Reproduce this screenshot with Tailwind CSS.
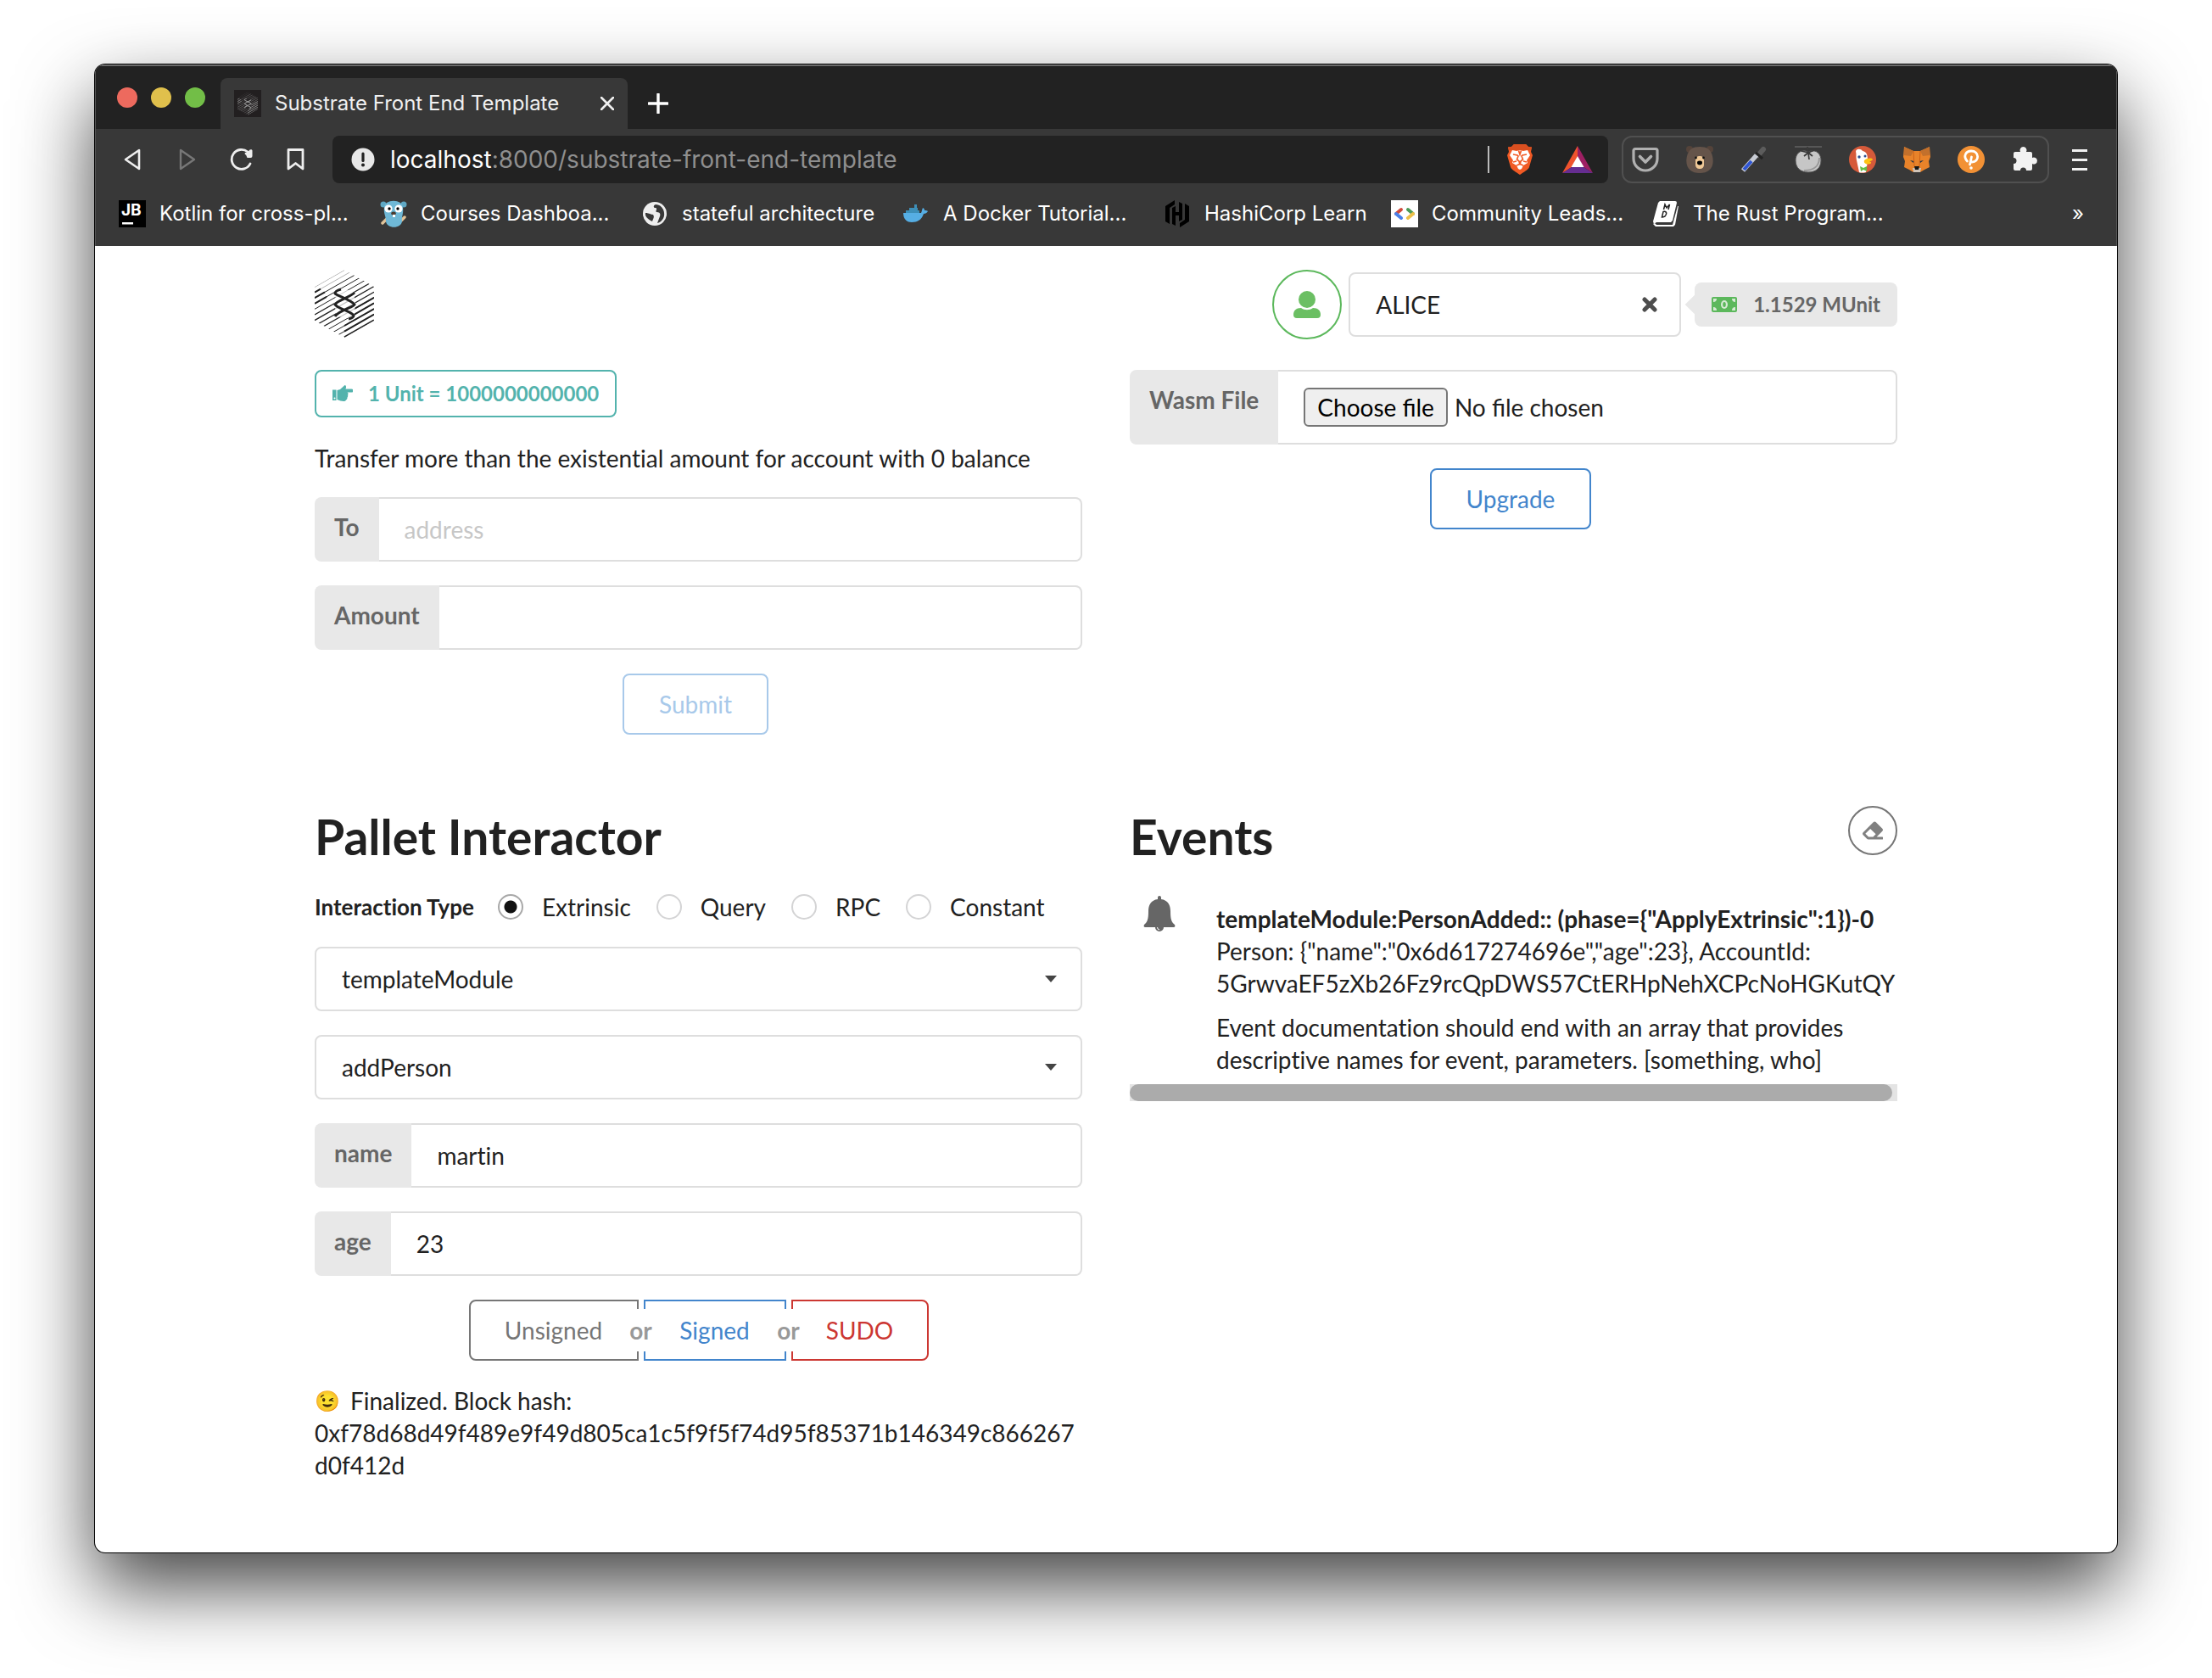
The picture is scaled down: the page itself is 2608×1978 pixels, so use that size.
<!DOCTYPE html>
<html lang="en">
<head>
<meta charset="utf-8">
<meta name="viewport" content="width=device-width, initial-scale=1">
<title>Substrate Front End Template</title>
<script src="https://cdn.jsdelivr.net/npm/@tailwindcss/browser@4"></script>
</head>
<body class="flex min-h-screen bg-white px-28 pt-19 pb-37 font-['Lato',sans-serif] text-[28px] leading-10 text-[#212121] [font-variant-ligatures:no-common-ligatures]">

<svg class="absolute size-0" aria-hidden="true">
  <defs>
    <clipPath id="hex"><path d="M35 0 70 20V60L35 80 0 60V20Z"/></clipPath>
    <symbol id="substrate" viewBox="0 0 70 80">
      <g clip-path="url(#hex)" stroke="currentColor" fill="none">
        <path stroke-width=".7" opacity=".5" d="M0 20.500 35 .5M0 26.600 70-13.400"/>
        <path stroke-width="1" d="M0 33.200 70-6.800M0 39.800 70-.2M0 46.400 70 6.400"/>
        <path stroke-width="1.300" d="M0 53 70 13M0 59.600 70 19.600M0 66.200 70 26.200M0 72.800 70 32.800"/>
        <path stroke-width="1" d="M0 79.400 70 39.400M0 86 70 46M0 92.600 70 52.600"/>
        <path stroke-width="2" d="M0 26.600 7 22.600M0 33.200 12 26.300M0 39.800 14 31.800M46 46.500 70 32.800M40 56.600 70 39.400M35 66 70 46M35 72.600 70 52.600M35 79.400 70 59.400"/>
      </g>
      <path d="M26 24 46 24 48 42 46 58 26 55 23 40Z" fill="var(--hole,#fff)" opacity=".75"/>
      <path d="M31 23C27 24 24 26 24 28 25 30 44 36 47 41 46 44 28 48 24 55M47 27C41 33 26 36 24 41 27 46 44 49 46 54 46 56 44 57 40 58" fill="none" stroke="currentColor" stroke-width="3"/>
    </symbol>
    <symbol id="caret" viewBox="0 0 14 8"><path d="M0 0H14L7 8Z" fill="currentColor"/></symbol>
  </defs>
</svg>

<div class="flex min-w-0 flex-1 flex-col overflow-hidden rounded-xl bg-white shadow-[0_0_0_1px_#000,0_40px_90px_rgba(0,0,0,0.74)]">

  <header class="border-x border-t-2 border-x-[#555] border-t-[#6b6b6b] bg-[#383838] font-['Inter',sans-serif] text-2xl text-[#f0f0f0]">
    <div class="flex h-[74px] items-end bg-[#222]">
      <div class="mt-[25px] ml-[25px] flex gap-4 self-start">
        <button aria-label="Close window" class="size-6 rounded-full bg-[#ed6a5e]"></button>
        <button aria-label="Minimise window" class="size-6 rounded-full bg-[#e0c04c]"></button>
        <button aria-label="Zoom window" class="size-6 rounded-full bg-[#72be47]"></button>
      </div>
      <div class="ml-[18px] flex h-15 w-120 items-center gap-4 rounded-t-lg bg-[#383838] px-4">
        <span class="flex size-8 items-center justify-center bg-[#221f20] text-[#999] [--hole:#221f20]"><svg class="h-7 w-6"><use href="#substrate"/></svg></span>
        <span class="flex-1 truncate">Substrate Front End Template</span>
        <button aria-label="Close tab"><svg class="size-4" viewBox="0 0 16 16"><path d="M1 1 15 15M15 1 1 15" stroke="#f0f0f0" stroke-width="2.6" stroke-linecap="round"/></svg></button>
      </div>
      <button aria-label="New tab" class="ml-6 flex h-15 items-center"><svg class="size-6" viewBox="0 0 24 24"><path d="M12 1V23M1 12H23" stroke="#fff" stroke-width="3.4" stroke-linecap="round"/></svg></button>
    </div>

    <div class="flex h-18 items-center pl-3">
      <button aria-label="Back" class="flex w-16 justify-center"><svg class="size-7" viewBox="0 0 28 28"><path d="M21 3V25L5 14Z" fill="none" stroke="#eee" stroke-width="2.6" stroke-linejoin="round"/></svg></button>
      <button aria-label="Forward" class="flex w-16 justify-center"><svg class="size-7" viewBox="0 0 28 28"><path d="M6 3V25L22 14Z" fill="none" stroke="#777" stroke-width="2.4" stroke-linejoin="round"/></svg></button>
      <button aria-label="Reload" class="flex w-16 justify-center"><svg class="size-7" viewBox="0 0 28 28"><path d="M24 19A11.5 11.5 0 1 1 21 5" fill="none" stroke="#eee" stroke-width="2.8" stroke-linecap="round"/><path d="M19 8.500a1.500 1.500 0 0 1-1-2.500c2 0 4-1 5-3 .8-1.300 3.500-1 3.500.5V10a2 2 0 0 1-2 2h-4z" fill="#eee"/></svg></button>
      <button aria-label="Bookmark this page" class="flex w-16 justify-center"><svg class="size-7" viewBox="0 0 28 28"><path d="M5 2.500H22V25L13.500 18.500 5 25Z" fill="none" stroke="#eee" stroke-width="2.8" stroke-linejoin="round"/></svg></button>

      <div class="ml-[11px] flex h-14 min-w-0 flex-1 items-center rounded-lg bg-[#222] pr-[18px] pl-[22px]">
        <svg class="size-7 shrink-0" viewBox="0 0 28 28"><circle cx="14" cy="14" r="13.500" fill="#e8e8e8"/><path d="M14 7v8.500" stroke="#222" stroke-width="3.200" stroke-linecap="round"/><circle cx="14" cy="20.500" r="2" fill="#222"/></svg>
        <div class="ml-[18px] flex-1 truncate pt-0.5 text-[28px] text-[#8f8f8f]"><span class="text-white">localhost</span>:8000/substrate-front-end-template</div>
        <span class="h-8 w-0.5 bg-[#bbb]"></span>
        <button aria-label="Brave Shields" class="ml-5"><svg class="h-9 w-8" viewBox="0 0 32 36"><path d="M9 0H23L26 3 30 3.500 29 9 31 13 27 27C26 30 20 33 16 36 12 33 6 30 5 27L1 13 3 9 2 3.500 6 3Z" fill="#f15a24"/><path d="M9 0H23L26 3 30 3.500 29 7H3L2 3.500 6 3Z" fill="#d94f20"/><path d="M7 7 12 8 16 7 20 8 25 7 28 13 24 19 25 22 20 25 18 29 16 30 14 29 12 25 7 22 8 19 4 13Z" fill="#fff"/><path d="M8 12 13 13 14 14 12.500 18 15 20 16 24 17 20 19.500 18 18 14 19 13 24 12M8 21 12 20M24 21 20 20M12 25 16 23.500 20 25M14.500 7.500 16 12 17.500 7.500" stroke="#f15a24" stroke-width="1.700" fill="none"/></svg></button>
        <button aria-label="Brave Rewards" class="ml-[34px]"><svg class="h-8 w-9" viewBox="0 0 36 32"><path d="M18 0V13L11 25 0 32Z" fill="#f0532d"/><path d="M18 0 36 32 25 25 18 13Z" fill="#9e1f63"/><path d="M0 32 11 25H25L36 32Z" fill="#662d91"/><path d="M18 12 25.500 25H10.500Z" fill="#fff"/></svg></button>
      </div>

      <div class="ml-4 flex h-14 w-126 items-center justify-between rounded-xl border-2 border-[#505050] px-2.5">
        <button aria-label="Pocket"><svg class="size-8" viewBox="0 0 32 32"><path d="M4 3.500H28A2 2 0 0 1 30 5.500V15A14 14 0 0 1 2 15V5.500A2 2 0 0 1 4 3.500Z" fill="none" stroke="#b0b0b0" stroke-width="3.200"/><path d="M9.500 12.500 16 19 22.500 12.500" fill="none" stroke="#b0b0b0" stroke-width="3.600" stroke-linecap="round" stroke-linejoin="round"/></svg></button>
        <button aria-label="TunnelBear"><svg class="size-8" viewBox="0 0 32 32"><circle cx="4" cy="4" r="4" fill="#54433a"/><circle cx="28" cy="4" r="4" fill="#54433a"/><path d="M16 1C24 1 29 4 31 12 34 25 27 32 16 32S-2 25 1 12C3 4 8 1 16 1Z" fill="#65544a"/><rect x="11" y="12" width="10" height="15" rx="4.500" fill="#f0c896"/><ellipse cx="16" cy="20" rx="3" ry="2.400" fill="#000"/><circle cx="11.500" cy="14" r="1.400" fill="#111"/><circle cx="20.500" cy="14" r="1.400" fill="#111"/></svg></button>
        <button aria-label="Colour picker"><svg class="size-8" viewBox="0 0 32 32"><path d="M21 11 27 4" stroke="#5c5c5c" stroke-width="6" stroke-linecap="round"/><path d="M18 8 26 15" stroke="#222" stroke-width="3"/><path d="M3 29 19 11" stroke="#c8ccd4" stroke-width="5.500"/><path d="M4 28 13 18" stroke="#2f55d4" stroke-width="4"/></svg></button>
        <button aria-label="Pomodoro timer"><svg class="size-8" viewBox="0 0 32 32"><path d="M0 1H32" stroke="#777"/><path d="M16 7C26 3 31 10 31 17 31 26 25 31 16 31S1 26 1 17C1 10 6 3 16 7Z" fill="#c6c6c6" stroke="#555"/><path d="M29 14C29 24 22 29 11 29" stroke="#999" stroke-width="2" fill="none"/><path d="M15 1 16 8M16 8 8 6M16 8 11 12M16 8 17 16M16 8 23 5M16 8 21 12" stroke="#3a3a3a" stroke-width="1.700"/></svg></button>
        <button aria-label="DuckDuckGo"><svg class="size-8" viewBox="0 0 32 32"><circle cx="16" cy="16" r="16" fill="#d65a3a"/><path d="M8 7C8 3 14 3 16 6 21 7 22 11 22 16L21 25 20 31C16 32 13 31.500 12 31L9 17C8 12 9 10 8 7Z" fill="#fff"/><path d="M18 17C22 14 27 14 28 16 28 17 25 18 24 18.500 27 19 27 21 23 21.500 20 22 17 20 18 17Z" fill="#fdc214"/><path d="M13 24 17 26 21 24V30L17 28 14 30Z" fill="#65bc46"/><circle cx="12" cy="13" r="1.700" fill="#2d4f8e"/><circle cx="19" cy="12" r="1.500" fill="#2d4f8e"/></svg></button>
        <button aria-label="MetaMask"><svg class="size-8" viewBox="0 0 32 32"><path d="M1 1 12 6H20L31 1 32 13 30 18 31 25 25 28 20 31H12L7 28 1 25 2 18 0 13Z" fill="#e8832a"/><path d="M1 1 12 6 9 12 1 11ZM31 1 20 6 23 12 31 11Z" fill="#c2702c"/><path d="M8 17 13 18 12 20ZM24 17 19 18 20 20Z" fill="#233447"/><path d="M11 26H21L20 31H12Z" fill="#d0c4b8"/><path d="M13 24H19L18 28H14Z" fill="#161616"/><path d="M12 6 13 24M20 6 19 24" stroke="#cd6116" fill="none"/></svg></button>
        <button aria-label="Polkadot"><svg class="size-8" viewBox="0 0 32 32"><circle cx="16" cy="16" r="16" fill="#f29135"/><path d="M11.500 18C6 12 10 6 16 6 26 6 26 19 17 19M16.500 13 14.500 22" fill="none" stroke="#fff" stroke-width="2.800" stroke-linecap="round"/><circle cx="16" cy="26" r="1.800" fill="#fff"/></svg></button>
        <button aria-label="Extensions"><svg class="size-8" viewBox="0 0 32 32"><path d="M2 9A2 2 0 0 1 4 7H10A4 4 0 1 1 17 7H22A2 2 0 0 1 24 9V14A4 4 0 1 1 24 21V27A2 2 0 0 1 22 29H17A3.500 3.500 0 0 0 10 29H4A2 2 0 0 1 2 27V21A3.500 3.500 0 0 0 2 14Z" fill="#f2f2f2"/></svg></button>
      </div>
      <button aria-label="Menu" class="mr-[34px] ml-[27px] flex w-[18px] flex-col gap-2"><span class="h-[3px] bg-[#f2f2f2]"></span><span class="h-[3px] bg-[#f2f2f2]"></span><span class="h-[3px] bg-[#f2f2f2]"></span></button>
    </div>

    <nav aria-label="Bookmarks" class="flex h-[66px] items-center pb-2.5 pl-[27px] whitespace-nowrap text-white">
      <a href="#" class="flex w-77 items-center gap-4"><svg class="size-8" viewBox="0 0 32 32"><rect width="32" height="32" fill="#000"/><text x="3" y="18" font-family="Inter" font-weight="700" font-size="19" fill="#fff">JB</text><rect x="4" y="26" width="13" height="2.500" fill="#fff"/></svg>Kotlin for cross-pl...</a>
      <a href="#" class="flex w-77 items-center gap-4"><svg class="size-8" viewBox="0 0 32 32"><circle cx="4" cy="5" r="3.500" fill="#5fa8c4"/><circle cx="28" cy="5" r="3.500" fill="#5fa8c4"/><path d="M3 27 8 22M29 20 25 24" stroke="#e0c49a" stroke-width="3.500" stroke-linecap="round"/><path d="M5 9C5-2 27-2 27 9 28 16 25 20 26 25 25 34 8 34 7 25 7 18 4 16 5 9Z" fill="#6fb8d6"/><circle cx="10" cy="10" r="4.600" fill="#fff"/><circle cx="22" cy="10" r="4.600" fill="#fff"/><circle cx="11" cy="10" r="1.700"/><circle cx="21" cy="10" r="1.700"/><ellipse cx="16" cy="15.500" rx="2.800" ry="2" fill="#4b3b30"/><rect x="15" y="17" width="3" height="3" fill="#fff"/></svg>Courses Dashboa...</a>
      <a href="#" class="flex w-77 items-center gap-4"><svg class="size-8" viewBox="0 0 32 32"><circle cx="16" cy="16" r="14" fill="#eee"/><path d="M5 15C9 15 11 17 14 17 16 20 14 22 13 25 9 23 4 20 5 15ZM17 5C14 6 14 9 17 9 20 10 16 13 18 14 22 14 23 16 22 19 21 22 20 24 19 27 26 25 29 18 26 11 24 7 21 5 17 5Z" fill="#383838"/></svg>stateful architecture</a>
      <a href="#" class="flex w-77 items-center gap-4"><svg class="size-8" viewBox="0 0 32 32"><path d="M1 15H22C23 13 23 11 24 9 26 10 26 11 26 12 28 12 29 12 30 13 29 15 27 16 25 16 23 22 19 26 11 26 4 26 1 21 1 15Z" fill="#56aee4"/><path d="M4 12H20V15H4ZM8 9H18V12H8ZM14 5H17V9H14Z" fill="#3d8fb8"/></svg>A Docker Tutorial...</a>
      <a href="#" class="flex w-67 items-center gap-4"><svg class="size-8" viewBox="0 0 32 32"><path d="M13 0V5L7 9V28L2 25V7ZM19 32V27L25 23V4L30 7V25ZM10 9 14 7V14H18V2L22 4V23L18 25V18H14V30L10 28Z" fill="#000"/></svg>HashiCorp Learn</a>
      <a href="#" class="flex w-77 items-center gap-4"><svg class="size-8" viewBox="0 0 32 32"><rect width="32" height="32" fill="#fff"/><g fill="none" stroke-width="4" stroke-linecap="round"><path d="M12 11 6 16" stroke="#d0493b"/><path d="M6 16 12 21" stroke="#4a80e8"/><path d="M20 11 26 16" stroke="#4a9a56"/><path d="M26 16 20 21" stroke="#eec04a"/></g></svg>Community Leads...</a>
      <a href="#" class="flex items-center gap-4"><svg class="size-8" viewBox="0 0 32 32"><path d="M9 1H27A2 2 0 0 1 29 3L24 24 22 26H5L2 28 1 25 7 3Z" fill="#fff"/><path d="M31 7 27 29 25 31H4L1 28 3 27 5 29H24L30 7Z" fill="#fff"/><path d="M13.500 11 15 5 17 9 20.500 5 19 11M11.500 20 13 13.500C19 12 17 20 11.500 20Z" stroke="#222" stroke-width="1.500" fill="none"/></svg>The Rust Program...</a>
      <button aria-label="More bookmarks" class="mr-[38px] ml-auto">»</button>
    </nav>
  </header>

  <main class="mx-auto w-[1866px] max-w-full flex-1 pt-7">
    <div class="flex h-[82px] items-center justify-between">
      <a href="#" aria-label="Substrate" class="self-start"><svg class="h-20 w-[70px]"><use href="#substrate"/></svg></a>
      <div class="flex items-center">
        <button aria-label="Copy address" class="flex size-[82px] items-center justify-center rounded-full border-2 border-[#5cb85c] text-[#6bbf63]"><svg class="h-8 w-8" viewBox="0 0 32 32"><ellipse cx="16" cy="10" rx="10" ry="10" fill="currentColor"/><path d="M9 20C13 23 19 23 23 20 29 20 32 23 32 28A4 4 0 0 1 28 32H4A4 4 0 0 1 0 28C0 23 3 20 9 20Z" fill="currentColor"/></svg></button>
        <div class="relative ml-2 w-[392px]">
          <select aria-label="Account" class="h-19 w-full appearance-none rounded-lg border-2 border-[#dedede] bg-white pl-[30px]"><option>ALICE</option></select>
          <button aria-label="Clear account" class="absolute top-1/2 right-7 -translate-y-1/2"><svg class="size-[18px]" viewBox="0 0 18 18"><path d="M3 3 15 15M15 3 3 15" stroke="#4d4d4d" stroke-width="5" stroke-linecap="round"/></svg></button>
        </div>
        <div class="relative ml-4 flex h-[52px] items-center rounded-lg bg-[#e8e8e8] px-5 text-2xl font-bold text-[#666]">
          <span class="absolute top-1/2 left-0 size-4 -translate-1/2 rotate-45 bg-[#e8e8e8]"></span>
          <svg class="mr-[19px] h-[18px] w-[30px]" viewBox="0 0 30 18"><rect width="30" height="18" rx="2" fill="#5cb85c"/><path d="M2 6V2H6A4 4 0 0 1 2 6ZM28 6V2H24A4 4 0 0 0 28 6ZM2 12V16H6A4 4 0 0 0 2 12ZM28 12V16H24A4 4 0 0 1 28 12Z" fill="#d7ead5"/><ellipse cx="15" cy="9" rx="4" ry="5" fill="#d7ead5"/><ellipse cx="15" cy="9" rx="1.800" ry="3" fill="#5cb85c"/></svg>1.1529 MUnit
        </div>
      </div>
    </div>

    <div class="mt-9 grid grid-cols-2 gap-14">
      <form>
        <div class="flex"><span class="flex h-14 items-center rounded-lg border-2 border-[#53b3ad] px-[19px] text-2xl font-bold text-[#53b3ad]"><svg class="mr-[18px] h-5 w-6" viewBox="0 0 24 20"><path d="M0 5.500H4.500V18H0Z" fill="currentColor"/><circle cx="2.500" cy="15.500" r="1" fill="#fff"/><path d="M5.500 6 9 5 14.500 0C16 0 16.500 2 15.500 4.500H22.500A1.500 1.500 0 0 1 22.500 8.500H17.500C19 9.500 18.500 11 18 11.500 18.500 13 18 14 17.500 14.500 17.500 16 17 17 16 17.500 15 20 10 19 5.500 17Z" fill="currentColor"/></svg>1 Unit = 1000000000000</span></div>
        <p class="mt-7 mb-[26px]">Transfer more than the existential amount for account with 0 balance</p>
        <div class="flex h-19"><label for="to" class="rounded-l-lg bg-[#e8e8e8] px-[23px] pt-[15px] font-bold text-[#666]">To</label><input id="to" type="text" placeholder="address" class="min-w-0 flex-1 rounded-r-lg border-2 border-l-0 border-[#dedede] pl-[30px] placeholder:text-[#c7c7c7]"></div>
        <div class="mt-7 flex h-19"><label for="amount" class="rounded-l-lg bg-[#e8e8e8] px-[23px] pt-[15px] font-bold text-[#666]">Amount</label><input id="amount" type="number" class="min-w-0 flex-1 rounded-r-lg border-2 border-l-0 border-[#dedede] pl-[30px]"></div>
        <div class="mt-7 flex justify-center"><button type="button" disabled class="mr-[7px] h-18 rounded-lg border-2 border-[#a8c9ea] px-[41px] text-[#a8c9ea]">Submit</button></div>
      </form>
      <form>
        <div class="flex h-22 [font-variant-ligatures:normal]">
          <label for="wasm" class="rounded-l-lg bg-[#e8e8e8] px-[23px] pt-[15px] font-bold text-[#666]">Wasm File</label>
          <div class="flex flex-1 items-center rounded-r-lg border-2 border-l-0 border-[#dedede] pl-[30px]">
            <input id="wasm" type="file" class="sr-only"><label for="wasm" class="flex h-[46px] items-center rounded-md border-2 border-[#767676] bg-[#efefef] px-3.5 text-black">Choose file</label><span class="ml-2">No file chosen</span>
          </div>
        </div>
        <div class="mt-7 flex justify-center"><button type="button" class="mr-[7px] h-18 rounded-lg border-2 border-[#4285cc] px-[41px] text-[#4285cc]">Upgrade</button></div>
      </form>
    </div>

    <div class="mt-21 grid grid-cols-2 gap-14 pb-20">
      <form>
        <h1 class="text-[57px] leading-[72px] font-bold">Pallet Interactor</h1>
        <div class="mt-6 flex h-[46px] items-center">
          <span class="mr-7 text-[26px] font-bold">Interaction Type</span>
          <label class="mr-[30px] flex items-center gap-[22px]"><input type="radio" name="type" checked class="size-[30px] appearance-none rounded-full border-2 border-[#d4d4d5] checked:border-[#a8a8a8] checked:bg-[radial-gradient(circle,#111_7px,white_8px)]">Extrinsic</label>
          <label class="mr-[30px] flex items-center gap-[22px]"><input type="radio" name="type" class="size-[30px] appearance-none rounded-full border-2 border-[#d4d4d5] checked:border-[#a8a8a8] checked:bg-[radial-gradient(circle,#111_7px,white_8px)]">Query</label>
          <label class="mr-[30px] flex items-center gap-[22px]"><input type="radio" name="type" class="size-[30px] appearance-none rounded-full border-2 border-[#d4d4d5] checked:border-[#a8a8a8] checked:bg-[radial-gradient(circle,#111_7px,white_8px)]">RPC</label>
          <label class="flex items-center gap-[22px]"><input type="radio" name="type" class="size-[30px] appearance-none rounded-full border-2 border-[#d4d4d5] checked:border-[#a8a8a8] checked:bg-[radial-gradient(circle,#111_7px,white_8px)]">Constant</label>
        </div>
        <div class="relative mt-6"><select aria-label="Pallets / RPC" class="block h-19 w-full appearance-none rounded-lg border-2 border-[#dedede] bg-white pl-[30px]"><option>templateModule</option></select><svg class="pointer-events-none absolute top-1/2 right-[30px] h-2 w-3.5 -translate-y-1/2 text-[#444]"><use href="#caret"/></svg></div>
        <div class="relative mt-7"><select aria-label="Callables" class="block h-19 w-full appearance-none rounded-lg border-2 border-[#dedede] bg-white pl-[30px]"><option>addPerson</option></select><svg class="pointer-events-none absolute top-1/2 right-[30px] h-2 w-3.5 -translate-y-1/2 text-[#444]"><use href="#caret"/></svg></div>
        <div class="mt-7 flex h-19"><label for="name" class="rounded-l-lg bg-[#e8e8e8] px-[23px] pt-[15px] font-bold text-[#666]">name</label><input id="name" type="text" value="martin" class="min-w-0 flex-1 rounded-r-lg border-2 border-l-0 border-[#dedede] pl-[30px]"></div>
        <div class="mt-7 flex h-19"><label for="age" class="rounded-l-lg bg-[#e8e8e8] px-[23px] pt-[15px] font-bold text-[#666]">age</label><input id="age" type="text" value="23" class="min-w-0 flex-1 rounded-r-lg border-2 border-l-0 border-[#dedede] pl-[30px]"></div>
        <div class="mt-7 flex justify-center">
          <button type="button" class="h-18 w-50 rounded-l-lg border-2 border-[#767676] text-[#767676]">Unsigned</button>
          <span class="relative w-1.5"><span class="absolute top-1/2 left-1/2 flex h-[50px] w-9 -translate-1/2 items-center justify-center bg-white font-bold text-[#999]">or</span></span>
          <button type="button" class="h-18 w-42 border-2 border-[#4285cc] text-[#4285cc]">Signed</button>
          <span class="relative w-1.5"><span class="absolute top-1/2 left-1/2 flex h-[50px] w-9 -translate-1/2 items-center justify-center bg-white font-bold text-[#999]">or</span></span>
          <button type="button" class="h-18 w-[162px] rounded-r-lg border-2 border-[#cc3732] text-[#cc3732]">SUDO</button>
        </div>
        <div class="mt-7 leading-[38px] wrap-break-word">
          <div class="flex items-center gap-3"><span class="text-2xl leading-[38px]">😉</span><span>Finalized. Block hash:</span></div>
          <p>0xf78d68d49f489e9f49d805ca1c5f9f5f74d95f85371b146349c866267d0f412d</p>
        </div>
      </form>

      <section>
        <div class="flex items-start justify-between">
          <h1 class="text-[57px] leading-[72px] font-bold">Events</h1>
          <button aria-label="Clear events" class="flex size-[58px] items-center justify-center rounded-full border-2 border-[#767676] text-[#808080]"><svg class="size-6" viewBox="0 0 512 512"><path fill="currentColor" d="M497.941 273.941c18.745-18.745 18.745-49.137 0-67.882l-160-160c-18.745-18.745-49.136-18.746-67.883 0l-256 256c-18.745 18.745-18.745 49.137 0 67.882l96 96A48.004 48.004 0 0 0 144 480h356c6.627 0 12-5.373 12-12v-40c0-6.627-5.373-12-12-12H355.883l142.058-142.059zm-302.627-62.627l137.373 137.373L265.373 416H150.628l-80-80 124.686-124.686z"/></svg></button>
        </div>
        <div class="mt-[34px] flex overflow-hidden">
          <svg class="mr-12 ml-4 h-[42px] w-[38px] shrink-0" viewBox="0 0 38 42"><path d="M17 2A2 2 0 0 1 21 2V4C29 5 32 11 32 18 32 27 33 31 37 34 38 36 37 37 36 37H24A5 5 0 0 1 14 37H2C1 37 0 36 1 34 5 31 6 27 6 18 6 11 9 5 17 4Z" fill="#666"/><path d="M16.500 37A3 3 0 0 0 19 40" stroke="#fff" fill="none"/></svg>
          <div class="w-0 flex-1 pt-2 leading-[38px]">
            <p class="font-bold">templateModule:PersonAdded:: (phase={"ApplyExtrinsic":1})-0</p>
            <p>Person: {"name":"0x6d617274696e","age":23}, AccountId: 5GrwvaEF5zXb26Fz9rcQpDWS57CtERHpNehXCPcNoHGKutQY</p>
            <p class="mt-3.5">Event documentation should end with an array that provides descriptive names for event, parameters. [something, who]</p>
          </div>
        </div>
        <div class="mt-2.5 h-5 bg-[#e4e4e4] pr-1.5"><div class="h-5 rounded-full bg-[#ababab]"></div></div>
      </section>
    </div>
  </main>
</div>
</body>
</html>
